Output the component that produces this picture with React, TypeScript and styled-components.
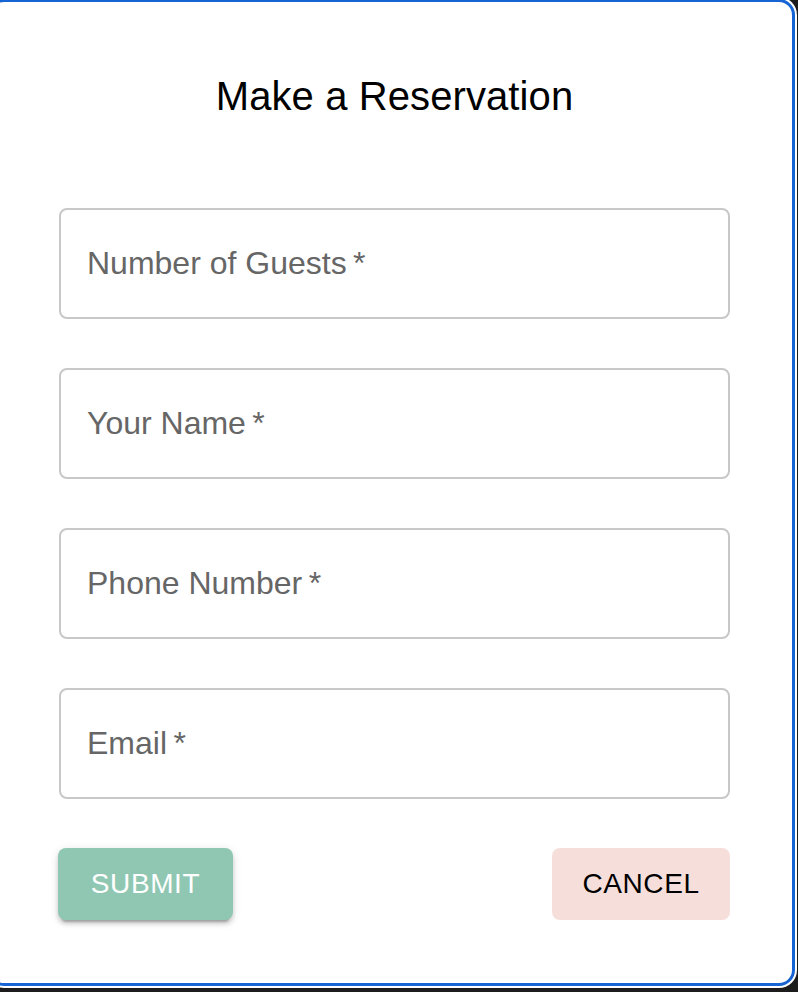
import React from "react";
import styled, { createGlobalStyle } from "styled-components";

const Global = createGlobalStyle`
  html, body {
    margin: 0;
    padding: 0;
    background: #1c1c1c;
    overflow: hidden;
  }
  body {
    width: 798px;
    height: 992px;
    font-family: "Liberation Sans", Arial, sans-serif;
  }
`;

const Dialog = styled.div`
  box-sizing: border-box;
  margin-top: -1px;
  margin-left: -12px;
  width: 807px;
  height: 987px;
  background: #ffffff;
  border: 3px solid #1764d4;
  border-radius: 16px;
  box-shadow: 0 0 0 2px #ffffff;
  padding: 62px 62px 0 68px;
  display: flex;
  flex-direction: column;
`;

const Title = styled.h2`
  margin: 0;
  font-size: 40px;
  line-height: 64px;
  font-weight: 400;
  color: #000;
  text-align: center;
  letter-spacing: 0.1px;
`;

const Form = styled.form`
  margin-top: 80px;
  display: flex;
  flex-direction: column;
  gap: 49px;
`;

const Field = styled.div`
  box-sizing: border-box;
  height: 111px;
  border: 2px solid #c8c8c8;
  border-radius: 8px;
  display: flex;
  align-items: center;
  padding: 0 0 0 26px;
`;

const Label = styled.label`
  font-size: 32px;
  line-height: 46px;
  color: #666666;
  margin-top: -2px;
`;

const Actions = styled.div`
  margin-top: 49px;
  display: flex;
  justify-content: space-between;
  align-items: center;
`;

const Button = styled.button<{ $variant: "submit" | "cancel" }>`
  box-sizing: border-box;
  height: 72px;
  min-width: 128px;
  padding: 0;
  border: none;
  border-radius: 8px;
  font-family: "Liberation Sans", Arial, sans-serif;
  font-size: 28px;
  letter-spacing: 0.6px;
  text-transform: uppercase;
  cursor: pointer;
  background: ${(p) => (p.$variant === "submit" ? "#8fc7b3" : "#f6dfda")};
  color: ${(p) => (p.$variant === "submit" ? "#ffffff" : "#000000")};
  box-shadow: ${(p) =>
    p.$variant === "submit"
      ? "0 6px 2px -4px rgba(0,0,0,0.2), 0 4px 4px 0 rgba(0,0,0,0.14), 0 2px 10px 0 rgba(0,0,0,0.12)"
      : "none"};
`;

const SubmitButton = styled(Button)`
  width: 175px;
  margin-left: -1px;
`;

const CancelButton = styled(Button)`
  width: 178px;
`;

const fields = ["Number of Guests", "Your Name", "Phone Number", "Email"];

export default function App() {
  return (
    <>
      <Global />
      <Dialog>
        <Title>Make a Reservation</Title>
        <Form onSubmit={(e) => e.preventDefault()}>
          {fields.map((f) => (
            <Field key={f}>
              <Label>
                {f}
                {"\u2009*"}
              </Label>
            </Field>
          ))}
        </Form>
        <Actions>
          <SubmitButton $variant="submit" type="button">
            Submit
          </SubmitButton>
          <CancelButton $variant="cancel" type="button">
            Cancel
          </CancelButton>
        </Actions>
      </Dialog>
    </>
  );
}
